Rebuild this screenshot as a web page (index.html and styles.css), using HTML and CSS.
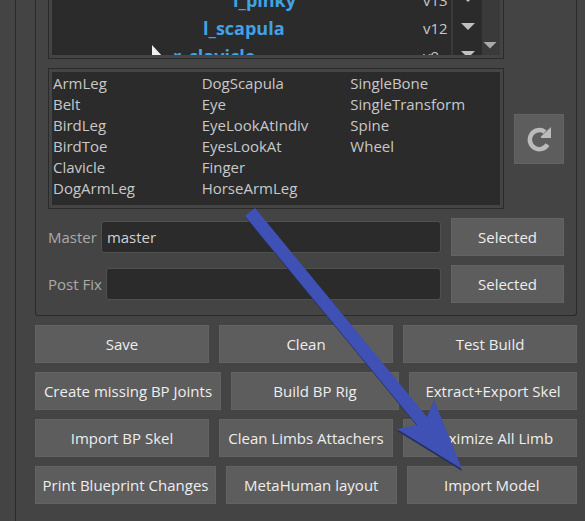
FILE: index.html
```html
<!DOCTYPE html>
<html lang="en">
<head>
<meta charset="utf-8">
<title>Rig Builder</title>
<link rel="stylesheet" href="styles.css">
</head>
<body>
<main class="panel">
  <section class="group">
    <div class="group-row">
      <div class="frame tree-frame">
        <div class="tree">
          <ul class="nodes">
            <li class="node level-3"><span class="node-name">l_pinky</span><span class="version"><select aria-label="l_pinky version"><option>v13</option></select></span></li>
            <li class="node level-2"><span class="node-name">l_scapula</span><span class="version"><select aria-label="l_scapula version"><option>v12</option></select></span></li>
            <li class="node level-1"><span class="node-name">r_clavicle</span><span class="version"><select aria-label="r_clavicle version"><option>v9</option></select></span></li>
          </ul>
          <div class="scrollbar"><button class="scroll-down" type="button" aria-label="Scroll down"></button></div>
          <svg class="cursor" viewBox="0 0 12 18" aria-hidden="true"><path d="M0 0V17L4 13H12Z"/></svg>
        </div>
      </div>
      <div class="side"></div>
    </div>
    <div class="group-row">
      <div class="frame list-frame">
        <ul class="types">
          <li>ArmLeg</li><li>Belt</li><li>BirdLeg</li><li>BirdToe</li><li>Clavicle</li><li>DogArmLeg</li>
          <li>DogScapula</li><li>Eye</li><li>EyeLookAtIndiv</li><li>EyesLookAt</li><li>Finger</li><li>HorseArmLeg</li>
          <li>SingleBone</li><li>SingleTransform</li><li>Spine</li><li>Wheel</li>
        </ul>
      </div>
      <div class="side">
        <button class="btn refresh" type="button" aria-label="Refresh">
          <svg viewBox="0 0 24 26" aria-hidden="true"><path class="ring" d="M20.500 18.500A9.500 9.500 0 1 1 18 6"/><path class="tip" d="M24 1V12H14V10.500Z"/></svg>
        </button>
      </div>
    </div>
    <div class="field">
      <label for="master">Master</label>
      <input id="master" type="text" value="master">
      <button class="btn pick" type="button">Selected</button>
    </div>
    <div class="field">
      <label for="postfix">Post Fix</label>
      <input id="postfix" type="text">
      <button class="btn pick" type="button">Selected</button>
    </div>
  </section>
  <div class="actions">
    <button class="btn" type="button">Save</button>
    <button class="btn" type="button">Clean</button>
    <button class="btn" type="button">Test Build</button>
  </div>
  <div class="actions first-wide">
    <button class="btn" type="button">Create missing BP Joints</button>
    <button class="btn" type="button">Build BP Rig</button>
    <button class="btn" type="button">Extract+Export Skel</button>
  </div>
  <div class="actions">
    <button class="btn" type="button">Import BP Skel</button>
    <button class="btn" type="button">Clean Limbs Attachers</button>
    <button class="btn" type="button">Maximize All Limb</button>
  </div>
  <div class="actions first-medium">
    <button class="btn" type="button">Print Blueprint Changes</button>
    <button class="btn" type="button">MetaHuman layout</button>
    <button class="btn" type="button">Import Model</button>
  </div>
</main>
<svg class="pointer" viewBox="0 0 585 521" aria-hidden="true">
  <path class="pointer-shadow" d="M245 217L255 209L427 418L434 401L462 471L397 431L417 426Z"/>
  <path class="pointer-body" d="M245 216L255 208L427 417L434 400L462 469L397 429L417 425Z"/>
</svg>
</body>
</html>
```
FILE: styles.css
```css
* {
  box-sizing: border-box;
}

body {
  margin: 0;
  position: relative;
  min-height: 100vh;
  padding-left: 15px;
  background: #444;
  color: #c8c8c8;
  font-family: "Open Sans", "Noto Sans", sans-serif;
  font-size: 15px;
  line-height: 21px;
  overflow: hidden;
}

button,
input,
select {
  font: inherit;
}

ul {
  margin: 0;
  padding: 0;
  list-style: none;
}

.panel {
  min-height: 100vh;
  padding: 0 8px 16px 19px;
  border-left: 1px solid #2b2b2b;
  display: flex;
  flex-direction: column;
  gap: 9px;
}

.group {
  padding: 0 12px 12px;
  border: 1px solid #2b2b2b;
  border-top: 0;
  border-radius: 0 0 3px 3px;
  display: flex;
  flex-direction: column;
  gap: 9px;
}

.group-row {
  display: flex;
  align-items: center;
  gap: 10px;
}

.frame {
  flex: 1;
  min-width: 0;
  padding: 3px;
  border: 1px solid #2b2b2b;
}

.tree-frame {
  padding-top: 0;
  border-top: 0;
}

.side {
  flex: 0 0 50px;
}

.tree {
  position: relative;
  display: flex;
  height: 55px;
  background: #2b2b2b;
  overflow: hidden;
}

.nodes {
  flex: 1;
  margin-top: -14px;
}

.node {
  display: flex;
  align-items: center;
  justify-content: space-between;
  height: 28px;
}

.level-1 { padding-left: 121px; }
.level-2 { padding-left: 151px; }
.level-3 { padding-left: 181px; }

.node-name {
  color: #41a2e6;
  font-size: 18px;
  font-weight: 700;
}

.version {
  position: relative;
  width: 59px;
  height: 28px;
}

.version select {
  appearance: none;
  width: 100%;
  height: 100%;
  padding: 0;
  border: 0;
  background: linear-gradient(#3a3a3a, #3a3a3a) 28px 0 / 2px 100% no-repeat;
  color: #c8c8c8;
}

.version::after,
.scroll-down::after {
  content: "";
  display: block;
  width: 14px;
  height: 7px;
  background: #c0c0c0;
  clip-path: polygon(0 0, 100% 0, 50% 100%);
}

.version::after {
  position: absolute;
  top: 9px;
  right: 7px;
  pointer-events: none;
}

.scrollbar {
  flex: 0 0 18px;
  display: flex;
  align-items: flex-end;
  background: #3a3a3a;
}

.scroll-down {
  width: 18px;
  height: 20px;
  padding: 0 1px;
  border: 0;
  background: none;
}

.scroll-down::after {
  background: #aaa;
}

.cursor {
  position: absolute;
  left: 100px;
  top: 45px;
  width: 12px;
  height: 18px;
  fill: #f0f0f0;
}

.types {
  display: grid;
  grid-template-rows: repeat(6, 21px);
  grid-template-columns: repeat(3, 1fr);
  grid-auto-flow: column;
  padding: 1px 1px 6px;
  background: #2b2b2b;
}

.btn {
  height: 38px;
  padding: 0;
  border: 1px solid #636363;
  background: #5d5d5d;
  color: #eee;
  white-space: nowrap;
}

.refresh {
  display: flex;
  align-items: center;
  justify-content: center;
  width: 50px;
  height: 50px;
}

.refresh svg {
  width: 24px;
  height: 26px;
}

.ring {
  fill: none;
  stroke: #bbb;
  stroke-width: 4.500;
}

.tip {
  fill: #bbb;
}

.field {
  display: flex;
  align-items: center;
}

.field label {
  margin-right: 4px;
  color: #aaa;
}

.field input {
  flex: 1;
  min-width: 0;
  height: 32px;
  padding: 0 5px;
  border: 1px solid #505050;
  border-radius: 3px;
  background: #2b2b2b;
  color: #d0d0d0;
  outline: 0;
}

.pick {
  flex: 0 0 113px;
  margin-left: 10px;
}

.actions {
  display: grid;
  grid-template-columns: repeat(3, 1fr);
  gap: 10px;
}

.first-wide {
  grid-template-columns: 186px 1fr 1fr;
}

.first-medium {
  grid-template-columns: 181px 1fr 1fr;
}

.pointer {
  position: absolute;
  left: 0;
  top: 0;
  width: 585px;
  height: 521px;
  pointer-events: none;
}

.pointer-body {
  fill: #3f51b5;
}

.pointer-shadow {
  fill: #26305f;
}
```
